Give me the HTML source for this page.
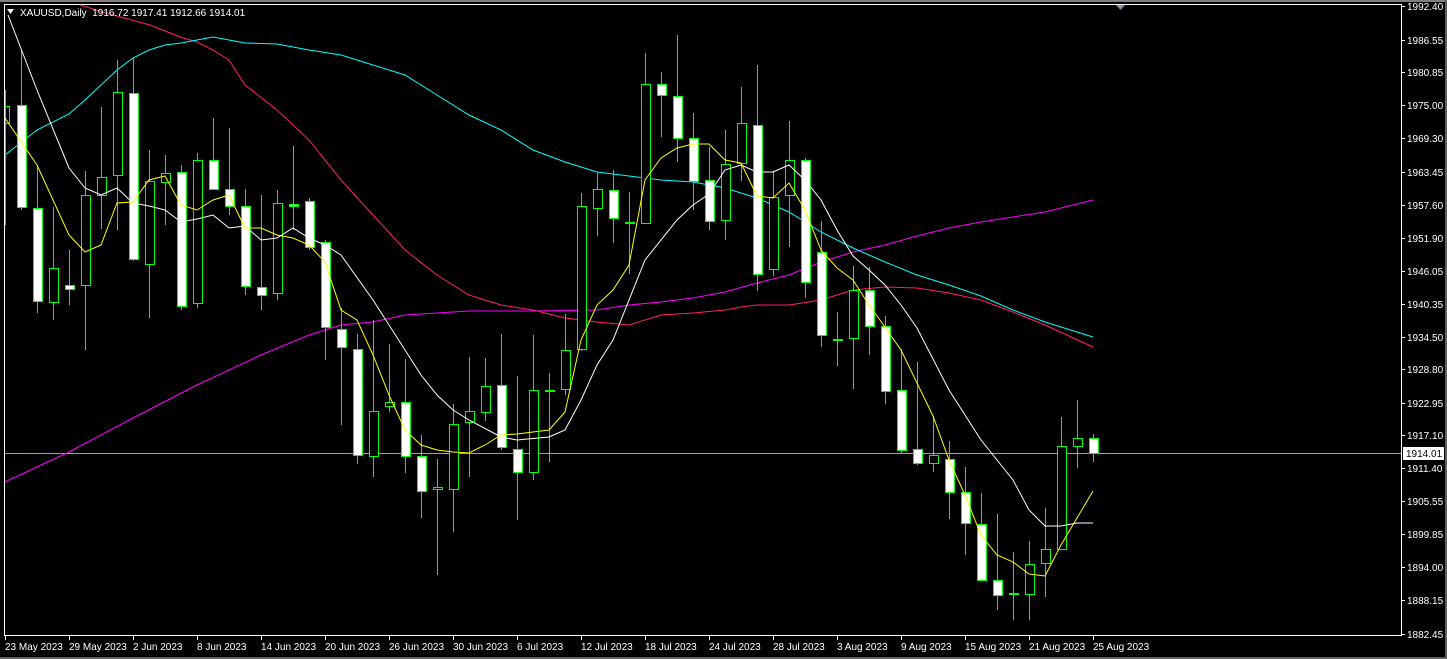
<!DOCTYPE html>
<html><head><meta charset="utf-8"><style>
html,body{margin:0;padding:0;background:#000;width:1447px;height:659px;overflow:hidden}
svg{display:block}
text{font-family:"Liberation Sans",sans-serif;font-size:10px;fill:#fff}
.h{fill:#000;stroke:#00ff00;stroke-width:1;shape-rendering:crispEdges}
.b{fill:#fff;stroke:#00ff00;stroke-width:1;shape-rendering:crispEdges}
</style></head><body>
<svg width="1447" height="659" viewBox="0 0 1447 659" xmlns="http://www.w3.org/2000/svg">
<rect x="0" y="0" width="1447" height="659" fill="#000"/>
<rect x="0" y="0" width="1447" height="2" fill="#808080"/>
<rect x="1445" y="0" width="2" height="659" fill="#606060"/>
<rect x="0" y="657" width="1447" height="2" fill="#606060"/>
<path d="M4.5 4.5H1401.5V635.5H4.5Z" fill="none" stroke="#fff" stroke-width="1"/>
<line x1="5" y1="453.5" x2="1401" y2="453.5" stroke="#a0a0a0" stroke-width="1"/>
<polyline fill="none" stroke="#ff00ff" stroke-width="1" points="5,482 69,452 133,418 197,385 261,355 309,335 341,325 373,322 405,315 469,311 533,311 597,310 629,305 661,302 693,298 725,292 757,283 789,275 821,262 853,252 885,245 917,236 949,228 981,222 1013,217 1045,212 1093,200"/>
<polyline fill="none" stroke="#ff1f6f" stroke-width="1" points="80,5 113,15 150,25 180,37 197,42 213,50 229,60 245,85 277,110 309,140 341,180 373,215 405,250 437,275 469,295 501,305 533,310 565,318 597,322 629,325 661,315 693,313 725,310 741,307 757,305 789,305 821,300 853,290 885,287 917,288 949,293 981,300 1013,312 1045,325 1093,347"/>
<polyline fill="none" stroke="#00ffff" stroke-width="1" points="5,155 37,130 69,114 85,100 101,85 117,70 133,58 149,50 165,45 181,43 197,40 213,37 229,40 245,43 277,44 309,50 341,55 373,65 405,75 437,95 469,115 501,130 533,150 565,162 597,172 629,176 661,180 693,182 725,188 757,198 789,212 821,232 853,248 885,262 917,275 949,285 981,296 1013,310 1045,322 1093,337"/>
<path stroke="#00ff00" stroke-width="1" fill="none" d="M5.5 90V225M21.5 50V210M37.5 166V313M53.5 207V320M69.5 250V305M85.5 171V350M101.5 107V229M117.5 60V230M133.5 58V261M149.5 150V318M165.5 155V225M181.5 165V310M197.5 153V308M213.5 118V190M229.5 128V215M245.5 189V295M261.5 195V310M277.5 190V300M293.5 146V230M309.5 198V250M325.5 240V360M341.5 308V425M357.5 334V464M373.5 320V477M389.5 344V412M405.5 359V473M421.5 435V518M437.5 459V575M453.5 404V532M469.5 357V477M485.5 358V421M501.5 334V450M517.5 376V520M533.5 335V480M549.5 373V462M565.5 314V395M581.5 193V351M597.5 172V236M613.5 170V243M629.5 192V274M645.5 53V223M661.5 72V137M677.5 35V162M693.5 113V210M709.5 147V230M725.5 130V240M741.5 87V181M757.5 65V291M773.5 171V276M789.5 121V247M805.5 158V298M821.5 221V347M837.5 312V366M853.5 266V389M869.5 267V355M885.5 316V404M901.5 349V454M917.5 362V465M933.5 416V472M949.5 441V519M965.5 467V555M981.5 493V580M997.5 514V610M1013.5 552V620M1029.5 541V620M1045.5 508V597M1061.5 417V549M1077.5 400V468M1093.5 434V462"/>
<g transform="translate(0.5,0.5)">
<rect class="h" x="5" y="106" width="4" height="17"/>
<rect class="b" x="17" y="105" width="9" height="102"/>
<rect class="b" x="33" y="208" width="9" height="93"/>
<rect class="h" x="49" y="268" width="9" height="34"/>
<rect class="b" x="65" y="285" width="9" height="4"/>
<rect class="h" x="81" y="195" width="9" height="90"/>
<rect class="h" x="97" y="177" width="9" height="18"/>
<rect class="h" x="113" y="92" width="9" height="83"/>
<rect class="b" x="129" y="93" width="9" height="166"/>
<rect class="h" x="145" y="181" width="9" height="83"/>
<rect class="h" x="161" y="173" width="9" height="9"/>
<rect class="b" x="177" y="172" width="9" height="134"/>
<rect class="h" x="193" y="160" width="9" height="143"/>
<rect class="b" x="209" y="160" width="9" height="29"/>
<rect class="b" x="225" y="189" width="9" height="17"/>
<rect class="b" x="241" y="206" width="9" height="80"/>
<rect class="b" x="257" y="287" width="9" height="8"/>
<rect class="h" x="273" y="203" width="9" height="90"/>
<rect class="b" x="289" y="204" width="9" height="2"/>
<rect class="b" x="305" y="201" width="9" height="46"/>
<rect class="b" x="321" y="242" width="9" height="85"/>
<rect class="b" x="337" y="329" width="9" height="18"/>
<rect class="b" x="353" y="349" width="9" height="106"/>
<rect class="h" x="369" y="411" width="9" height="45"/>
<rect class="h" x="385" y="402" width="9" height="4"/>
<rect class="b" x="401" y="402" width="9" height="54"/>
<rect class="b" x="417" y="456" width="9" height="35"/>
<rect class="h" x="433" y="487" width="9" height="2"/>
<rect class="h" x="449" y="424" width="9" height="65"/>
<rect class="h" x="465" y="411" width="9" height="11"/>
<rect class="h" x="481" y="386" width="9" height="26"/>
<rect class="b" x="497" y="385" width="9" height="62"/>
<rect class="b" x="513" y="449" width="9" height="23"/>
<rect class="h" x="529" y="390" width="9" height="82"/>
<rect class="h" x="545" y="390" width="9" height="1"/>
<rect class="h" x="561" y="350" width="9" height="39"/>
<rect class="h" x="577" y="206" width="9" height="143"/>
<rect class="h" x="593" y="189" width="9" height="19"/>
<rect class="b" x="609" y="190" width="9" height="28"/>
<rect class="h" x="625" y="222" width="9" height="1"/>
<rect class="h" x="641" y="84" width="9" height="139"/>
<rect class="b" x="657" y="84" width="9" height="11"/>
<rect class="b" x="673" y="96" width="9" height="42"/>
<rect class="b" x="689" y="138" width="9" height="43"/>
<rect class="b" x="705" y="180" width="9" height="41"/>
<rect class="h" x="721" y="164" width="9" height="56"/>
<rect class="h" x="737" y="123" width="9" height="40"/>
<rect class="b" x="753" y="125" width="9" height="149"/>
<rect class="h" x="769" y="197" width="9" height="72"/>
<rect class="h" x="785" y="160" width="9" height="35"/>
<rect class="b" x="801" y="160" width="9" height="122"/>
<rect class="b" x="817" y="252" width="9" height="83"/>
<rect class="h" x="833" y="339" width="9" height="1"/>
<rect class="h" x="849" y="290" width="9" height="48"/>
<rect class="b" x="865" y="290" width="9" height="36"/>
<rect class="b" x="881" y="326" width="9" height="65"/>
<rect class="b" x="897" y="390" width="9" height="60"/>
<rect class="b" x="913" y="449" width="9" height="14"/>
<rect class="h" x="929" y="455" width="9" height="8"/>
<rect class="b" x="945" y="459" width="9" height="33"/>
<rect class="b" x="961" y="492" width="9" height="31"/>
<rect class="b" x="977" y="524" width="9" height="56"/>
<rect class="b" x="993" y="580" width="9" height="15"/>
<rect class="h" x="1009" y="593" width="9" height="1"/>
<rect class="h" x="1025" y="564" width="9" height="30"/>
<rect class="h" x="1041" y="549" width="9" height="14"/>
<rect class="h" x="1057" y="446" width="9" height="103"/>
<rect class="h" x="1073" y="438" width="9" height="8"/>
<rect class="b" x="1089" y="438" width="9" height="15"/>
</g>
<polyline fill="none" stroke="#fff" stroke-width="1" points="8,15 37,90 69,168 85,188 101,195 117,188 133,203 149,206 165,210 181,222 197,219 213,215 229,228 245,226 261,240 277,238 293,228 309,238 325,245 341,255 373,300 405,350 421,375 437,395 453,410 469,420 501,437 517,440 549,437 565,430 581,400 597,365 613,340 645,260 677,220 693,205 709,194 725,170 741,165 757,172 773,172 789,165 805,180 821,200 837,230 853,256 869,270 885,285 901,305 917,328 949,390 981,440 1013,480 1029,510 1045,526 1061,526 1077,523 1093,523"/>
<polyline fill="none" stroke="#ffff00" stroke-width="1" points="5,118 37,165 69,235 85,252 101,245 117,203 133,202 149,180 165,176 181,205 197,210 213,200 229,195 245,228 261,228 277,235 293,238 309,245 325,262 341,310 357,320 373,355 389,395 405,430 421,445 437,450 453,452 469,453 485,445 501,435 517,434 533,432 549,430 565,412 581,340 597,305 613,290 629,265 645,180 661,158 677,148 693,144 709,144 725,160 741,163 757,196 773,198 789,183 805,210 821,250 837,268 853,280 869,305 880,320 901,350 933,416 949,460 965,495 981,535 997,555 1013,562 1029,574 1045,576 1061,545 1077,518 1093,491"/>
<path d="M7 9h7l-3.5 5z" fill="#fff"/>
<text x="20" y="16">XAUUSD,Daily&#160; 1916.72 1917.41 1912.66 1914.01</text>
<path d="M1116 5h9l-4.5 5z" fill="#8090a0"/>
<g stroke="#fff" stroke-width="1">
<path d="M1401 6.5h4M1401 40.5h4M1401 72.5h4M1401 105.5h4M1401 138.5h4M1401 172.5h4M1401 205.5h4M1401 238.5h4M1401 271.5h4M1401 304.5h4M1401 337.5h4M1401 369.5h4M1401 403.5h4M1401 435.5h4M1401 468.5h4M1401 501.5h4M1401 534.5h4M1401 567.5h4M1401 600.5h4M1401 634.5h4"/>
</g>
<g>
<text x="1407" y="10">1992.40</text>
<text x="1407" y="44">1986.55</text>
<text x="1407" y="76">1980.85</text>
<text x="1407" y="109">1975.00</text>
<text x="1407" y="142">1969.30</text>
<text x="1407" y="176">1963.45</text>
<text x="1407" y="209">1957.60</text>
<text x="1407" y="242">1951.90</text>
<text x="1407" y="275">1946.05</text>
<text x="1407" y="308">1940.35</text>
<text x="1407" y="341">1934.50</text>
<text x="1407" y="373">1928.80</text>
<text x="1407" y="407">1922.95</text>
<text x="1407" y="439">1917.10</text>
<text x="1407" y="472">1911.40</text>
<text x="1407" y="505">1905.55</text>
<text x="1407" y="538">1899.85</text>
<text x="1407" y="571">1894.00</text>
<text x="1407" y="604">1888.15</text>
<text x="1407" y="638">1882.45</text>
</g>
<rect x="1403" y="447" width="41" height="13" fill="#fff"/>
<text x="1406" y="457" style="fill:#000">1914.01</text>
<path stroke="#fff" stroke-width="1" d="M5.5 635v5M69.5 635v5M133.5 635v5M197.5 635v5M261.5 635v5M325.5 635v5M389.5 635v5M453.5 635v5M517.5 635v5M581.5 635v5M645.5 635v5M709.5 635v5M773.5 635v5M837.5 635v5M901.5 635v5M965.5 635v5M1029.5 635v5M1093.5 635v5"/>
<g>
<text x="5" y="650">23 May 2023</text>
<text x="69" y="650">29 May 2023</text>
<text x="133" y="650">2 Jun 2023</text>
<text x="197" y="650">8 Jun 2023</text>
<text x="261" y="650">14 Jun 2023</text>
<text x="325" y="650">20 Jun 2023</text>
<text x="389" y="650">26 Jun 2023</text>
<text x="453" y="650">30 Jun 2023</text>
<text x="517" y="650">6 Jul 2023</text>
<text x="581" y="650">12 Jul 2023</text>
<text x="645" y="650">18 Jul 2023</text>
<text x="709" y="650">24 Jul 2023</text>
<text x="773" y="650">28 Jul 2023</text>
<text x="837" y="650">3 Aug 2023</text>
<text x="901" y="650">9 Aug 2023</text>
<text x="965" y="650">15 Aug 2023</text>
<text x="1029" y="650">21 Aug 2023</text>
<text x="1093" y="650">25 Aug 2023</text>
</g>
</svg>
</body></html>
